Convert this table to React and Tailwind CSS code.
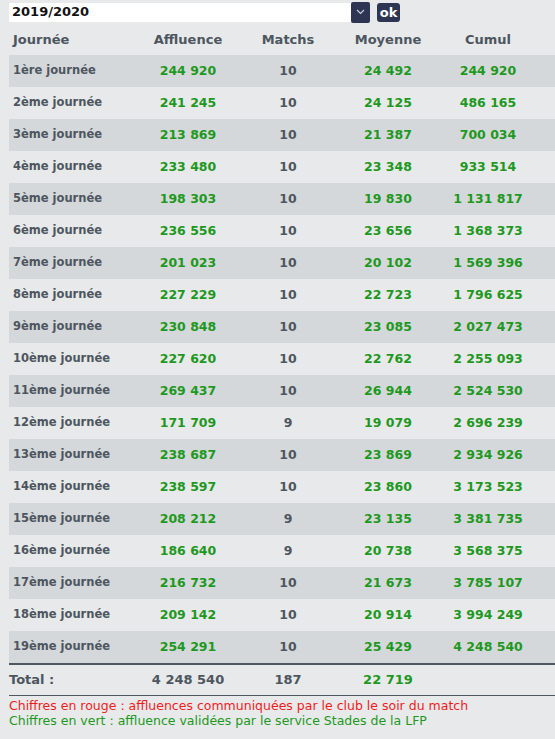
import React from "react";

const rows = [
  ["1ère journée", "244 920", "10", "24 492", "244 920"],
  ["2ème journée", "241 245", "10", "24 125", "486 165"],
  ["3ème journée", "213 869", "10", "21 387", "700 034"],
  ["4ème journée", "233 480", "10", "23 348", "933 514"],
  ["5ème journée", "198 303", "10", "19 830", "1 131 817"],
  ["6ème journée", "236 556", "10", "23 656", "1 368 373"],
  ["7ème journée", "201 023", "10", "20 102", "1 569 396"],
  ["8ème journée", "227 229", "10", "22 723", "1 796 625"],
  ["9ème journée", "230 848", "10", "23 085", "2 027 473"],
  ["10ème journée", "227 620", "10", "22 762", "2 255 093"],
  ["11ème journée", "269 437", "10", "26 944", "2 524 530"],
  ["12ème journée", "171 709", "9", "19 079", "2 696 239"],
  ["13ème journée", "238 687", "10", "23 869", "2 934 926"],
  ["14ème journée", "238 597", "10", "23 860", "3 173 523"],
  ["15ème journée", "208 212", "9", "23 135", "3 381 735"],
  ["16ème journée", "186 640", "9", "20 738", "3 568 375"],
  ["17ème journée", "216 732", "10", "21 673", "3 785 107"],
  ["18ème journée", "209 142", "10", "20 914", "3 994 249"],
  ["19ème journée", "254 291", "10", "25 429", "4 248 540"],
];

const grid = "grid grid-cols-[129px_100px_100px_100px_100px_1fr] items-center";

export default function App() {
  return (
    <div
      className="min-h-[739px] bg-[#e8e9ea] pl-[9px] pt-[1px]"
      style={{ fontFamily: '"DejaVu Sans", Verdana, sans-serif' }}
    >
      <div className="flex items-center h-[22px]">
        <div className="flex items-center w-[342px] h-[19px] bg-white pl-[3px] text-[13px] font-bold text-[#111]">
          2019/2020
        </div>
        <div className="w-[19px] h-[21px] bg-[#2e3553] rounded-[2px] flex items-center justify-center">
          <svg width="9" height="6" viewBox="0 0 9 6">
            <path d="M1 1 L4.5 4.5 L8 1" fill="none" stroke="#c9cde0" strokeWidth="1.2" />
          </svg>
        </div>
        <div className="ml-[7px] w-[23px] h-[19px] bg-[#2e3553] rounded-[3px] flex items-center justify-center text-white font-bold text-[13px] leading-none">
          ok
        </div>
      </div>
      <div className={`${grid} h-[32px] pt-[2px] text-[13px] font-bold text-[#4d5660]`}>
        <div className="pl-[4px]">Journée</div>
        <div className="text-center">Affluence</div>
        <div className="text-center">Matchs</div>
        <div className="text-center">Moyenne</div>
        <div className="text-center">Cumul</div>
        <div />
      </div>
      {rows.map((r, i) => (
        <div
          key={r[0]}
          className={`${grid} h-[32px] text-[12.5px] font-bold ${i % 2 === 0 ? "bg-[#d5d8da]" : "bg-[#e8e9ea]"}`}
        >
          <div className="pl-[4px] text-[11.5px] text-[#4d5660]">{r[0]}</div>
          <div className="text-center text-[#1e981e]">{r[1]}</div>
          <div className="text-center text-[#4d5660]">{r[2]}</div>
          <div className="text-center text-[#1e981e]">{r[3]}</div>
          <div className="text-center text-[#1e981e]">{r[4]}</div>
          <div />
        </div>
      ))}
      <div className={`${grid} h-[32px] border-t-2 border-[#4f5860] text-[13px] font-bold text-[#4d5660]`}>
        <div>Total :</div>
        <div className="text-center">4 248 540</div>
        <div className="text-center">187</div>
        <div className="text-center text-[#1e981e]">22 719</div>
        <div />
        <div />
      </div>
      <div className="border-t border-[#4f5860] pt-[2px] text-[12.5px] leading-[15px]">
        <div className="text-[#ee1c1c]">Chiffres en rouge : affluences communiquées par le club le soir du match</div>
        <div className="text-[#1e981e]">Chiffres en vert : affluence validées par le service Stades de la LFP</div>
      </div>
    </div>
  );
}
